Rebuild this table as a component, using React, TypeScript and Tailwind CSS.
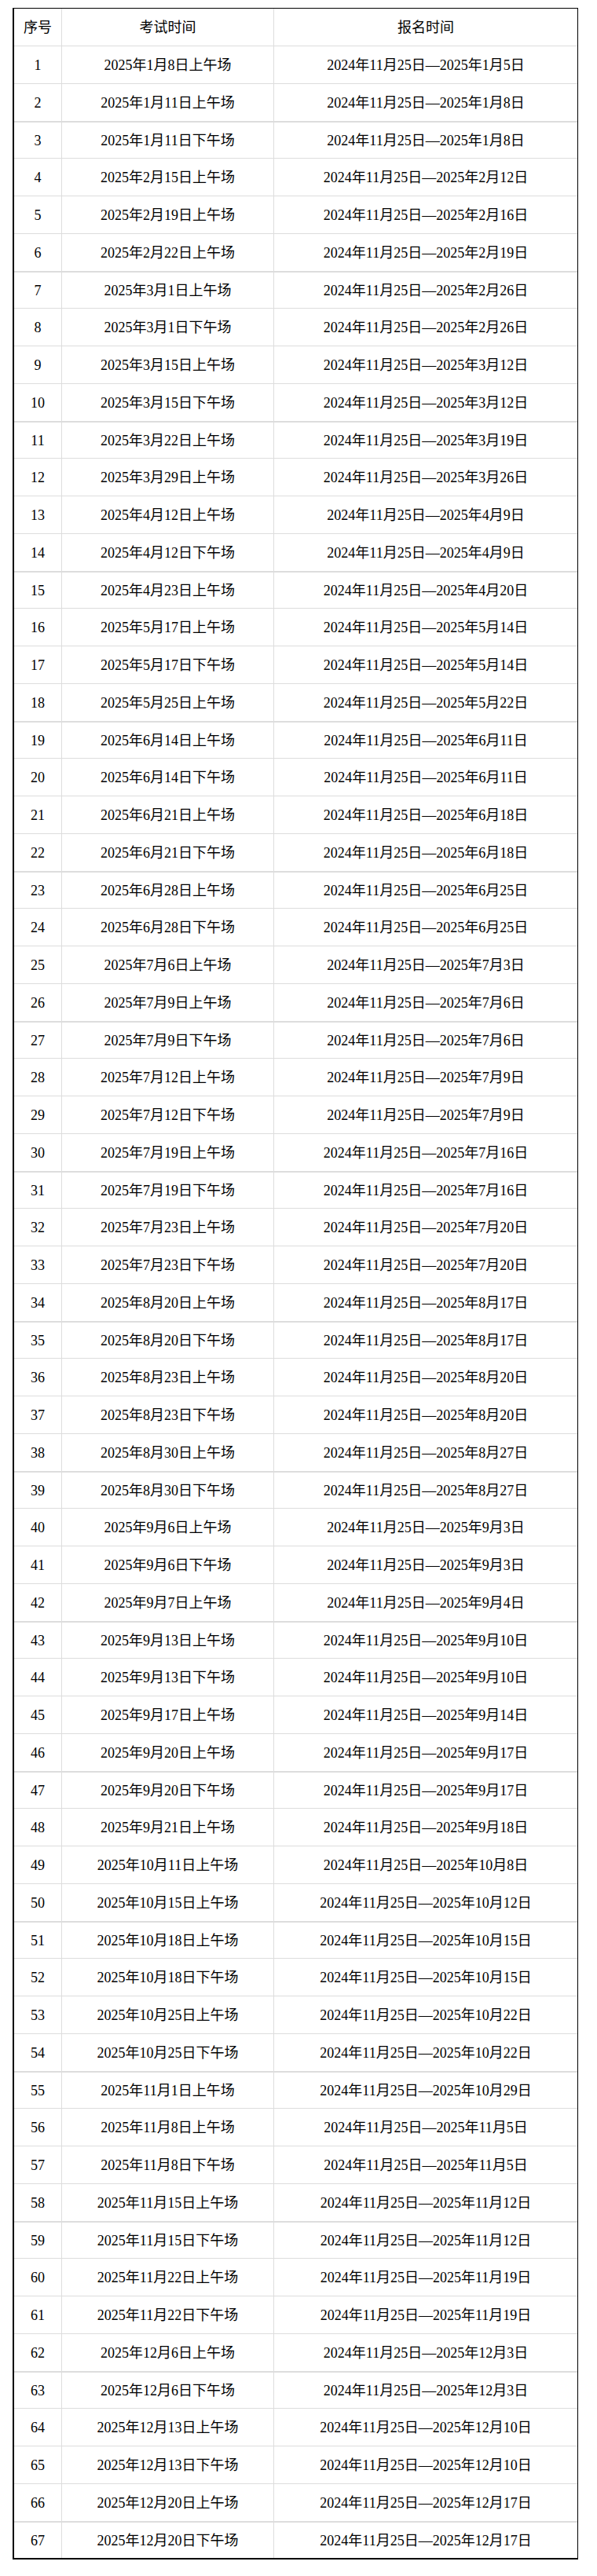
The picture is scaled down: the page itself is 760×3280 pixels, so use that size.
const exams: [string, string][] = [
  ["2025年1月8日上午场", "2025年1月5日"],
  ["2025年1月11日上午场", "2025年1月8日"],
  ["2025年1月11日下午场", "2025年1月8日"],
  ["2025年2月15日上午场", "2025年2月12日"],
  ["2025年2月19日上午场", "2025年2月16日"],
  ["2025年2月22日上午场", "2025年2月19日"],
  ["2025年3月1日上午场", "2025年2月26日"],
  ["2025年3月1日下午场", "2025年2月26日"],
  ["2025年3月15日上午场", "2025年3月12日"],
  ["2025年3月15日下午场", "2025年3月12日"],
  ["2025年3月22日上午场", "2025年3月19日"],
  ["2025年3月29日上午场", "2025年3月26日"],
  ["2025年4月12日上午场", "2025年4月9日"],
  ["2025年4月12日下午场", "2025年4月9日"],
  ["2025年4月23日上午场", "2025年4月20日"],
  ["2025年5月17日上午场", "2025年5月14日"],
  ["2025年5月17日下午场", "2025年5月14日"],
  ["2025年5月25日上午场", "2025年5月22日"],
  ["2025年6月14日上午场", "2025年6月11日"],
  ["2025年6月14日下午场", "2025年6月11日"],
  ["2025年6月21日上午场", "2025年6月18日"],
  ["2025年6月21日下午场", "2025年6月18日"],
  ["2025年6月28日上午场", "2025年6月25日"],
  ["2025年6月28日下午场", "2025年6月25日"],
  ["2025年7月6日上午场", "2025年7月3日"],
  ["2025年7月9日上午场", "2025年7月6日"],
  ["2025年7月9日下午场", "2025年7月6日"],
  ["2025年7月12日上午场", "2025年7月9日"],
  ["2025年7月12日下午场", "2025年7月9日"],
  ["2025年7月19日上午场", "2025年7月16日"],
  ["2025年7月19日下午场", "2025年7月16日"],
  ["2025年7月23日上午场", "2025年7月20日"],
  ["2025年7月23日下午场", "2025年7月20日"],
  ["2025年8月20日上午场", "2025年8月17日"],
  ["2025年8月20日下午场", "2025年8月17日"],
  ["2025年8月23日上午场", "2025年8月20日"],
  ["2025年8月23日下午场", "2025年8月20日"],
  ["2025年8月30日上午场", "2025年8月27日"],
  ["2025年8月30日下午场", "2025年8月27日"],
  ["2025年9月6日上午场", "2025年9月3日"],
  ["2025年9月6日下午场", "2025年9月3日"],
  ["2025年9月7日上午场", "2025年9月4日"],
  ["2025年9月13日上午场", "2025年9月10日"],
  ["2025年9月13日下午场", "2025年9月10日"],
  ["2025年9月17日上午场", "2025年9月14日"],
  ["2025年9月20日上午场", "2025年9月17日"],
  ["2025年9月20日下午场", "2025年9月17日"],
  ["2025年9月21日上午场", "2025年9月18日"],
  ["2025年10月11日上午场", "2025年10月8日"],
  ["2025年10月15日上午场", "2025年10月12日"],
  ["2025年10月18日上午场", "2025年10月15日"],
  ["2025年10月18日下午场", "2025年10月15日"],
  ["2025年10月25日上午场", "2025年10月22日"],
  ["2025年10月25日下午场", "2025年10月22日"],
  ["2025年11月1日上午场", "2025年10月29日"],
  ["2025年11月8日上午场", "2025年11月5日"],
  ["2025年11月8日下午场", "2025年11月5日"],
  ["2025年11月15日上午场", "2025年11月12日"],
  ["2025年11月15日下午场", "2025年11月12日"],
  ["2025年11月22日上午场", "2025年11月19日"],
  ["2025年11月22日下午场", "2025年11月19日"],
  ["2025年12月6日上午场", "2025年12月3日"],
  ["2025年12月6日下午场", "2025年12月3日"],
  ["2025年12月13日上午场", "2025年12月10日"],
  ["2025年12月13日下午场", "2025年12月10日"],
  ["2025年12月20日上午场", "2025年12月17日"],
  ["2025年12月20日下午场", "2025年12月17日"],
];

// rows repeat in groups of four (47.75px average), every second line of a group is 2px
function rowClass(n: number, last: boolean) {
  if (last) return "h-[45px]";
  switch (n % 4) {
    case 1:
      return "h-[48px] border-b border-[#ddd]";
    case 2:
      return "h-[49px] border-b-2 border-[#ddd]";
    case 3:
      return "h-[46px] border-b border-[#ddd]";
    default:
      return "h-[48px] border-b border-[#ddd]";
  }
}

function Row({ cells, className }: { cells: string[]; className: string }) {
  return (
    <div className={`flex ${className}`}>
      <div className="w-[61px] shrink-0 flex items-center justify-center border-r border-[#ddd]">{cells[0]}</div>
      <div className="w-[270px] shrink-0 flex items-center justify-center border-r border-[#ddd]">{cells[1]}</div>
      <div className="flex-1 flex items-center justify-center">{cells[2]}</div>
    </div>
  );
}

export default function App() {
  return (
    <div
      className="min-h-[3280px] bg-white pt-[10px] pl-[16px] text-[18px] leading-none text-black"
      style={{ fontFamily: '"Liberation Serif", "Noto Sans CJK SC", serif' }}
    >
      <div className="w-[720px] border-t border-r border-l-2 border-b-2 border-black">
        <Row cells={["序号", "考试时间", "报名时间"]} className="h-[48px] border-b border-[#ddd]" />
        {exams.map(([exam, end], i) => (
          <Row
            key={i}
            cells={[String(i + 1), exam, `2024年11月25日—${end}`]}
            className={rowClass(i + 1, i === exams.length - 1)}
          />
        ))}
      </div>
    </div>
  );
}
